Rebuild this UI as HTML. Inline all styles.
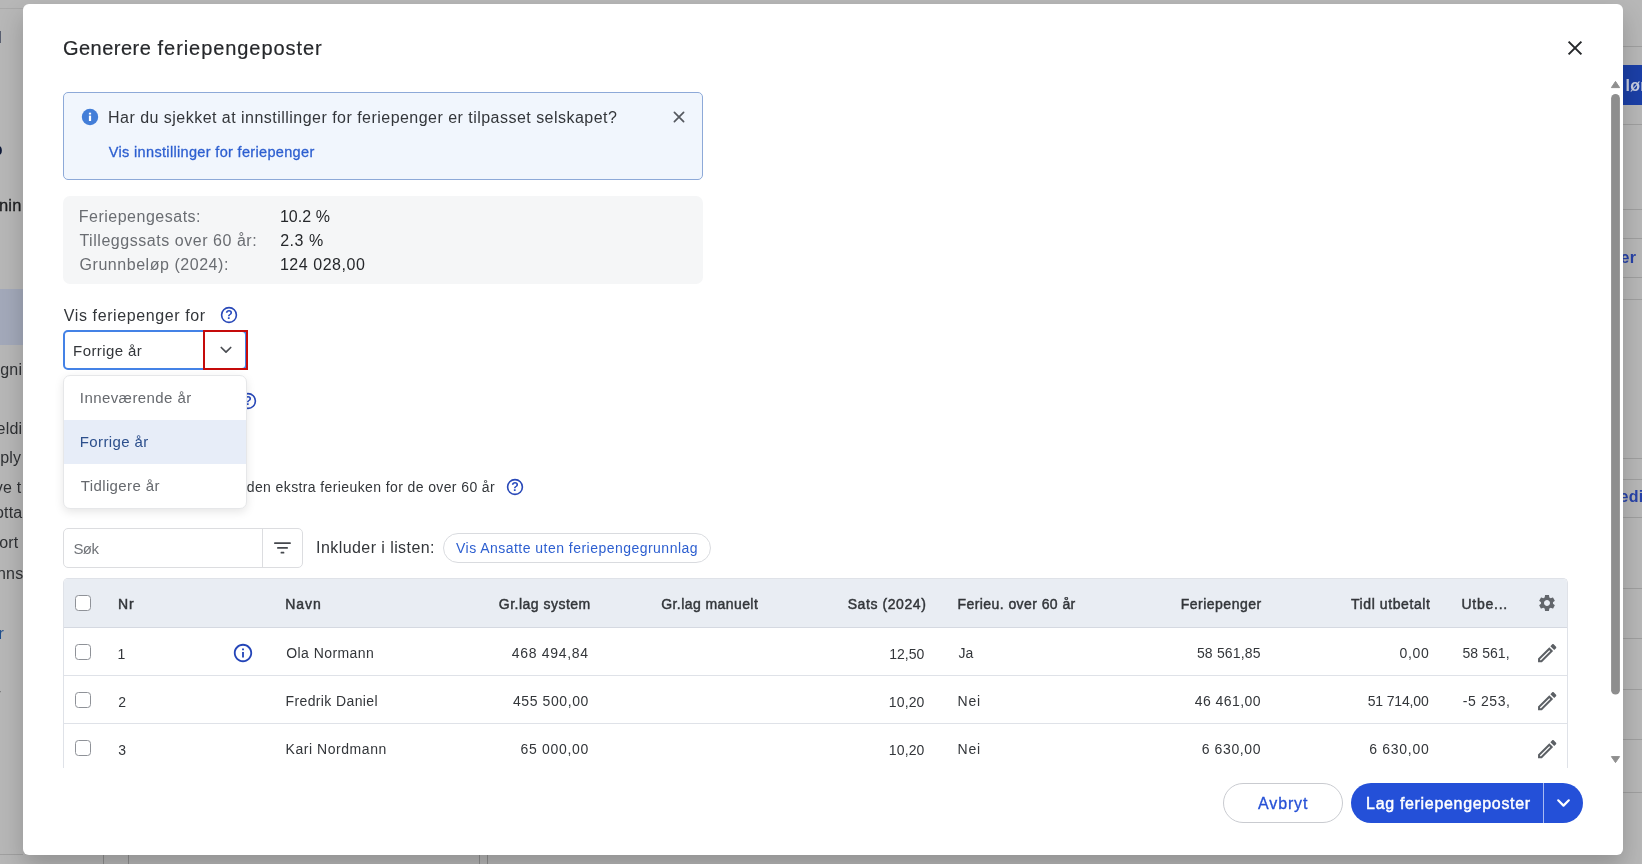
<!DOCTYPE html>
<html lang="nb">
<head>
<meta charset="utf-8">
<title>Generere feriepengeposter</title>
<style>
*{box-sizing:border-box;margin:0;padding:0}
html,body{width:1642px;height:864px;overflow:hidden;background:#b7b7b7;font-family:"Liberation Sans",sans-serif}
.abs,.t{position:absolute}
.t{white-space:nowrap;font-weight:400}
.t.m{-webkit-text-stroke:0.3px currentColor}
.t.m2{-webkit-text-stroke:0.2px currentColor}
.t.m3{-webkit-text-stroke:0.45px currentColor}
.t.b{font-weight:700}
#bg{position:absolute;left:0;top:0;width:1642px;height:864px;overflow:hidden;will-change:transform}
#modal{position:absolute;left:23px;top:4px;width:1600px;height:851px;background:#fff;border-radius:6px;box-shadow:0 12px 24px rgba(0,0,0,.2)}
#layer{position:absolute;left:0;top:0;width:1642px;height:864px;will-change:transform}
.alert{left:63px;top:92px;width:640px;height:88px;background:#f1f6fd;border:1px solid #8da9d8;border-radius:5px}
.facts{left:63px;top:196px;width:640px;height:88px;background:#f5f6f7;border-radius:7px}
.select{left:63px;top:330px;width:184px;height:40px;border:2px solid #4482e6;border-radius:5px;background:#fff}
.redbox{left:203px;top:330px;width:45px;height:40px;border:2px solid #c50a0a;border-radius:0}
.dd{left:63px;top:375px;width:184px;height:134px;background:#fff;border:1px solid #e6e7e9;border-radius:7px;box-shadow:0 3px 10px rgba(0,0,0,.10);overflow:hidden}
.dd .hl{position:absolute;left:0;top:44px;width:100%;height:44px;background:#e7edf8}
.search{left:63px;top:528px;width:240px;height:40px;border:1px solid #dcdde0;border-radius:5px;background:#fff}
.search i{position:absolute;left:198px;top:0;width:1px;height:38px;background:#dcdde0}
.chip{left:443px;top:533px;width:268px;height:30px;border:1px solid #d9dbdf;border-radius:15px;background:#fff}
.tbl{left:63px;top:578px;width:1505px;height:190px;border:1px solid #dfe2e8;border-bottom:none;border-radius:5px 5px 0 0;overflow:hidden;background:#fff}
.tbl .hd{position:absolute;left:0;top:0;width:100%;height:49px;background:#e9edf3;border-bottom:1px solid #d5d9e1}
.tbl .ln{position:absolute;left:0;width:100%;height:1px;background:#dfe2e8}
.cb{width:16px;height:16px;border:1px solid #8f9298;border-radius:3.5px;background:#fff}
.btn1{left:1223px;top:783px;width:120px;height:40px;border:1px solid #c9cbd0;border-radius:20px;background:#fff}
.btn2{left:1351px;top:783px;width:232px;height:40px;border-radius:20px;background:#2450d8}
.btn2 i{position:absolute;left:192px;top:0;width:1px;height:40px;background:#a9bbf2}
svg{position:absolute;overflow:visible}
</style>
</head>
<body>
<div id="bg">
<div class="abs" style="left:0;top:289px;width:23px;height:56px;background:#a3a9ba"></div>
<div class="abs" style="left:0;top:8px;width:23px;height:1px;background:#a9a9a9"></div>
<div class="abs" style="left:0;top:854px;width:23px;height:1px;background:#a0a0a0"></div>
<div class="abs" style="left:1623px;top:65px;width:19px;height:40px;background:#1b3fa6"></div>
<div class="abs" style="left:1623px;top:46px;width:19px;height:1px;background:#9f9f9f"></div>
<div class="abs" style="left:1623px;top:124px;width:19px;height:1px;background:#9f9f9f"></div>
<div class="abs" style="left:1623px;top:209px;width:19px;height:1px;background:#9f9f9f"></div>
<div class="abs" style="left:1623px;top:238px;width:19px;height:1px;background:#9f9f9f"></div>
<div class="abs" style="left:1623px;top:277px;width:19px;height:1px;background:#9f9f9f"></div>
<div class="abs" style="left:1623px;top:299px;width:19px;height:1px;background:#9f9f9f"></div>
<div class="abs" style="left:1623px;top:458px;width:19px;height:1px;background:#9f9f9f"></div>
<div class="abs" style="left:1623px;top:479px;width:19px;height:1px;background:#9f9f9f"></div>
<div class="abs" style="left:1623px;top:517px;width:19px;height:1px;background:#9f9f9f"></div>
<div class="abs" style="left:1623px;top:588px;width:19px;height:1px;background:#9f9f9f"></div>
<div class="abs" style="left:1623px;top:638px;width:19px;height:1px;background:#9f9f9f"></div>
<div class="abs" style="left:1623px;top:689px;width:19px;height:1px;background:#9f9f9f"></div>
<div class="abs" style="left:1623px;top:739px;width:19px;height:1px;background:#9f9f9f"></div>
<div class="abs" style="left:1623px;top:792px;width:19px;height:1px;background:#9f9f9f"></div>
<div class="abs" style="left:103px;top:855px;width:1px;height:9px;background:#8f8f8f"></div>
<div class="abs" style="left:128px;top:855px;width:1px;height:9px;background:#8f8f8f"></div>
<div class="abs" style="left:479px;top:855px;width:1px;height:9px;background:#8f8f8f"></div>
<div class="abs" style="left:487px;top:855px;width:1px;height:9px;background:#8f8f8f"></div>
<span class="t m" style="right:1620.4px;top:193.00px;font-size:16.5px;line-height:24px;color:#1c1d1f;letter-spacing:.2px">nin</span>
<span class="t" style="right:1619.8px;top:358.00px;font-size:16px;line-height:24px;color:#2f3134;letter-spacing:.2px">egni</span>
<span class="t" style="right:1619.7px;top:417.00px;font-size:16px;line-height:24px;color:#2f3134;letter-spacing:.2px">eldi</span>
<span class="t" style="right:1620.8px;top:446.00px;font-size:16px;line-height:24px;color:#2f3134;letter-spacing:.2px">ply</span>
<span class="t" style="right:1620.6px;top:476.00px;font-size:16px;line-height:24px;color:#2f3134;letter-spacing:.2px">ve t</span>
<span class="t" style="right:1619.6px;top:501.00px;font-size:16px;line-height:24px;color:#2f3134;letter-spacing:.2px">otta</span>
<span class="t" style="right:1623.6px;top:531.00px;font-size:16px;line-height:24px;color:#2f3134;letter-spacing:.2px">ort</span>
<span class="t" style="right:1618.6px;top:562.00px;font-size:16px;line-height:24px;color:#2f3134;letter-spacing:.2px">onns</span>
<span class="t" style="right:1638.0px;top:622.00px;font-size:16px;line-height:24px;color:#1f4e8c;letter-spacing:.2px">r</span>
<span class="t b" style="right:1640.0px;top:26.00px;font-size:16px;line-height:24px;color:#101b3a;letter-spacing:.2px">l</span>
<span class="t b" style="right:1639.4px;top:138.00px;font-size:16px;line-height:24px;color:#101b3a;letter-spacing:.2px">p</span>
<span class="t" style="right:1640.8px;top:679.00px;font-size:16px;line-height:24px;color:#2f3134;letter-spacing:.2px">-</span>
<span class="t b" style="left:1625.5px;top:73.5px;font-size:16px;line-height:24px;color:#c6cde0;letter-spacing:.3px">lønn</span>
<span class="t b" style="left:1620.5px;top:246px;font-size:16px;line-height:24px;color:#2742a8;letter-spacing:.3px">er</span>
<span class="t b" style="left:1619.5px;top:485px;font-size:16px;line-height:24px;color:#2742a8;letter-spacing:.3px">edit</span>
</div>
<div id="modal"></div>
<div id="layer">
<div class="abs alert"></div>
<div class="abs facts"></div>
<div class="abs select"></div>
<div class="abs redbox"></div>
<div class="abs search"><i></i></div>
<div class="abs chip"></div>
<div class="abs tbl"><div class="hd"></div><div class="ln" style="top:96px"></div><div class="ln" style="top:144px"></div></div>
<div class="abs cb" style="left:75px;top:595px"></div>
<div class="abs cb" style="left:75px;top:644px"></div>
<div class="abs cb" style="left:75px;top:692px"></div>
<div class="abs cb" style="left:75px;top:740px"></div>
<div class="abs btn1"></div>
<div class="abs btn2"><i></i></div>
<svg style="left:238px;top:390.7px" width="20" height="20" viewBox="0 0 20 20"><circle cx="10" cy="10" r="7.4" fill="#fff" stroke="#2848b8" stroke-width="1.6"/><text x="10" y="14.4" text-anchor="middle" font-family="Liberation Sans, sans-serif" font-weight="700" font-size="12.3" fill="#2a4dc0">?</text></svg>
<span class="t" style="left:95.00px;top:475px;font-size:14px;line-height:24px;color:#33363a;letter-spacing:0.390px;">Ta med feriepenger av den ekstra ferieuken for de over 60 år</span>
<div class="abs dd"><div class="hl"></div></div>
<svg style="left:80px;top:107px" width="20" height="20" viewBox="0 0 20 20"><circle cx="10" cy="10" r="8.2" fill="#437ed8"/><rect x="8.9" y="8.6" width="2.2" height="5.4" fill="#fff"/><rect x="8.9" y="5.7" width="2.2" height="1.8" fill="#fff"/></svg>
<svg style="left:673px;top:111px" width="12" height="12" viewBox="0 0 12 12"><path d="M1.4 1.4L10.6 10.6M10.6 1.4L1.4 10.6" stroke="#55595f" stroke-width="1.7" stroke-linecap="round" fill="none"/></svg>
<svg style="left:219.1px;top:305px" width="20" height="20" viewBox="0 0 20 20"><circle cx="10" cy="10" r="7.4" fill="#fff" stroke="#2848b8" stroke-width="1.6"/><text x="10" y="14.4" text-anchor="middle" font-family="Liberation Sans, sans-serif" font-weight="700" font-size="12.3" fill="#2a4dc0">?</text></svg>
<svg style="left:504.79999999999995px;top:477.3px" width="20" height="20" viewBox="0 0 20 20"><circle cx="10" cy="10" r="7.4" fill="#fff" stroke="#2848b8" stroke-width="1.6"/><text x="10" y="14.4" text-anchor="middle" font-family="Liberation Sans, sans-serif" font-weight="700" font-size="12.3" fill="#2a4dc0">?</text></svg>
<svg style="left:220px;top:345px" width="12" height="10" viewBox="0 0 12 10"><path d="M1.3 2.5L6 7.2L10.7 2.5" stroke="#4a4d52" stroke-width="1.7" fill="none" stroke-linecap="round" stroke-linejoin="round"/></svg>
<svg style="left:272px;top:540px" width="22" height="16" viewBox="0 0 22 16"><rect x="2.1" y="2.3" width="16.7" height="1.8" rx=".5" fill="#45484d"/><rect x="5.1" y="7" width="10.8" height="1.8" rx=".5" fill="#45484d"/><rect x="8.6" y="11.7" width="3.7" height="1.8" rx=".5" fill="#45484d"/></svg>
<svg style="left:232px;top:641.9px" width="22" height="22" viewBox="0 0 24 24"><path fill="#2445b8" d="M11 7h2v2h-2zm0 4h2v6h-2zm1-9C6.48 2 2 6.48 2 12s4.480 10 10 10 10-4.480 10-10S17.520 2 12 2zm0 18c-4.410 0-8-3.590-8-8s3.590-8 8-8 8 3.590 8 8-3.590 8-8 8z"/></svg>
<svg style="left:1537px;top:593px" width="20" height="20" viewBox="0 0 24 24"><path fill="#62666b" d="M19.140 12.940c.040-.300.060-.610.060-.940 0-.320-.020-.640-.070-.940l2.030-1.580c.180-.140.230-.410.120-.610l-1.920-3.320c-.120-.220-.370-.290-.590-.220l-2.390.960c-.500-.380-1.030-.700-1.620-.940l-.360-2.540c-.040-.240-.240-.410-.480-.410h-3.840c-.240 0-.430.170-.470.410l-.360 2.540c-.590.240-1.130.570-1.620.940l-2.390-.960c-.220-.080-.470 0-.590.220L2.740 8.870c-.120.210-.080.470.120.610l2.030 1.580c-.050.300-.090.630-.090.940s.020.640.070.940l-2.030 1.580c-.180.140-.230.410-.120.610l1.920 3.320c.120.220.370.290.590.220l2.390-.960c.500.380 1.030.700 1.620.940l.360 2.540c.050.240.240.410.480.410h3.840c.240 0 .440-.170.470-.410l.360-2.540c.590-.240 1.130-.560 1.620-.940l2.390.960c.220.080.470 0 .590-.220l1.920-3.320c.120-.220.070-.470-.120-.610l-2.010-1.580zM12 15.600c-1.980 0-3.600-1.620-3.600-3.600s1.620-3.600 3.600-3.600 3.600 1.620 3.600 3.600-1.620 3.600-3.600 3.600z"/></svg>
<svg style="left:1535px;top:640.9px" width="24.4" height="24.4" viewBox="0 0 24 24"><path fill="#5c6065" d="M14.060 9.020l.920.920L5.920 19H5v-.920l9.060-9.060M17.660 3c-.250 0-.510.100-.700.290l-1.830 1.830 3.750 3.750 1.830-1.830c.390-.390.390-1.020 0-1.410l-2.340-2.340c-.2-.2-.450-.290-.710-.290zm-3.600 3.190L3 17.250V21h3.750L17.810 9.940l-3.750-3.750z"/></svg>
<svg style="left:1535px;top:688.9px" width="24.4" height="24.4" viewBox="0 0 24 24"><path fill="#5c6065" d="M14.060 9.020l.920.920L5.920 19H5v-.920l9.060-9.060M17.660 3c-.250 0-.510.100-.700.290l-1.830 1.830 3.750 3.750 1.830-1.830c.390-.390.390-1.020 0-1.410l-2.340-2.340c-.2-.2-.450-.290-.710-.290zm-3.600 3.190L3 17.250V21h3.750L17.810 9.940l-3.750-3.750z"/></svg>
<svg style="left:1535px;top:736.9px" width="24.4" height="24.4" viewBox="0 0 24 24"><path fill="#5c6065" d="M14.060 9.020l.920.920L5.920 19H5v-.920l9.060-9.060M17.660 3c-.250 0-.510.100-.700.290l-1.830 1.830 3.750 3.750 1.830-1.830c.390-.390.390-1.020 0-1.410l-2.340-2.340c-.2-.2-.450-.290-.710-.290zm-3.600 3.190L3 17.250V21h3.750L17.810 9.940l-3.750-3.750z"/></svg>
<svg style="left:1567px;top:40px" width="16" height="16" viewBox="0 0 16 16"><path d="M1.6 1.6L14.4 14.4M14.4 1.6L1.6 14.4" stroke="#26282b" stroke-width="2" fill="none"/></svg>
<svg style="left:1608px;top:78px" width="15" height="690" viewBox="0 0 15 690"><path d="M7.5 3.4L11.6 9.6H3.4Z" fill="#8f8f8f" stroke="#8f8f8f" stroke-width="1" stroke-linejoin="round"/><rect x="3.1" y="16" width="8.8" height="600.6" rx="4.4" fill="#8e8e8e"/><path d="M7.5 684.6L11.6 678.6H3.4Z" fill="#8f8f8f" stroke="#8f8f8f" stroke-width="1" stroke-linejoin="round"/></svg>
<svg style="left:1556px;top:798px" width="15" height="11" viewBox="0 0 15 11"><path d="M2.2 2.3L7.5 7.6L12.8 2.3" stroke="#fff" stroke-width="2.2" fill="none" stroke-linecap="round" stroke-linejoin="round"/></svg>
<div class="abs" style="left:1455px;top:630px;width:55px;height:140px;overflow:hidden"><span class="t" style="left:calc(-1455px + 1462.50px);top:calc(-630px + 641px);font-size:14px;line-height:24px;color:#33363a;letter-spacing:0.063px;">58 561,</span><span class="t" style="left:calc(-1455px + 1462.80px);top:calc(-630px + 689px);font-size:14px;line-height:24px;color:#33363a;letter-spacing:0.584px;">-5 253,</span></div>
<span class="t m2" style="left:62.90px;top:33px;font-size:20px;line-height:30px;color:#26282b;letter-spacing:0.504px;">Generere</span>
<span class="t m2" style="left:157.60px;top:33px;font-size:20px;line-height:30px;color:#26282b;letter-spacing:0.930px;">feriepengeposter</span>
<span class="t" style="left:108.10px;top:106px;font-size:16px;line-height:24px;color:#33363a;letter-spacing:0.471px;">Har du sjekket at innstillinger for feriepenger er tilpasset selskapet?</span>
<span class="t m" style="left:108.80px;top:140px;font-size:14.5px;line-height:24px;color:#2d5fd0;letter-spacing:0.333px;">Vis innstillinger for feriepenger</span>
<span class="t" style="left:78.70px;top:205px;font-size:16px;line-height:24px;color:#6a6d72;letter-spacing:0.508px;">Feriepengesats:</span>
<span class="t" style="left:79.40px;top:229px;font-size:16px;line-height:24px;color:#6a6d72;letter-spacing:0.541px;">Tilleggssats over 60 år:</span>
<span class="t" style="left:79.60px;top:253px;font-size:16px;line-height:24px;color:#6a6d72;letter-spacing:0.536px;">Grunnbeløp (2024):</span>
<span class="t" style="left:279.90px;top:205px;font-size:16px;line-height:24px;color:#26282b;letter-spacing:0.063px;">10.2 %</span>
<span class="t" style="left:280.20px;top:229px;font-size:16px;line-height:24px;color:#26282b;letter-spacing:0.503px;">2.3 %</span>
<span class="t" style="left:279.90px;top:253px;font-size:16px;line-height:24px;color:#26282b;letter-spacing:0.547px;">124 028,00</span>
<span class="t" style="left:63.80px;top:304px;font-size:16px;line-height:24px;color:#33363a;letter-spacing:0.605px;">Vis feriepenger for</span>
<span class="t" style="left:73.10px;top:339px;font-size:15px;line-height:24px;color:#33363a;letter-spacing:0.398px;">Forrige år</span>
<span class="t" style="left:73.50px;top:537px;font-size:15px;line-height:24px;color:#707378;letter-spacing:-0.634px;">Søk</span>
<span class="t" style="left:316.00px;top:536px;font-size:16px;line-height:24px;color:#33363a;letter-spacing:0.434px;">Inkluder i listen:</span>
<span class="t" style="left:456.00px;top:536px;font-size:14px;line-height:24px;color:#2d5fd0;letter-spacing:0.472px;">Vis Ansatte uten feriepengegrunnlag</span>
<span class="t m3" style="left:118.00px;top:592px;font-size:14px;line-height:24px;color:#33363a;letter-spacing:0.890px;">Nr</span>
<span class="t m3" style="left:285.25px;top:592px;font-size:14px;line-height:24px;color:#33363a;letter-spacing:0.951px;">Navn</span>
<span class="t m3" style="left:498.75px;top:592px;font-size:14px;line-height:24px;color:#33363a;letter-spacing:0.494px;">Gr.lag system</span>
<span class="t m3" style="left:661.25px;top:592px;font-size:14px;line-height:24px;color:#33363a;letter-spacing:0.422px;">Gr.lag manuelt</span>
<span class="t m3" style="left:847.70px;top:592px;font-size:14px;line-height:24px;color:#33363a;letter-spacing:0.579px;">Sats (2024)</span>
<span class="t m3" style="left:957.50px;top:592px;font-size:14px;line-height:24px;color:#33363a;letter-spacing:0.427px;">Ferieu. over 60 år</span>
<span class="t m3" style="left:1180.70px;top:592px;font-size:14px;line-height:24px;color:#33363a;letter-spacing:0.497px;">Feriepenger</span>
<span class="t m3" style="left:1351.00px;top:592px;font-size:14px;line-height:24px;color:#33363a;letter-spacing:0.586px;">Tidl utbetalt</span>
<span class="t m3" style="left:1461.50px;top:592px;font-size:14px;line-height:24px;color:#33363a;letter-spacing:0.741px;">Utbe...</span>
<span class="t" style="left:117.60px;top:642px;font-size:14px;line-height:24px;color:#33363a;letter-spacing:0.000px;">1</span>
<span class="t" style="left:286.25px;top:641px;font-size:14px;line-height:24px;color:#33363a;letter-spacing:0.428px;">Ola Normann</span>
<span class="t" style="left:511.70px;top:641px;font-size:14px;line-height:24px;color:#33363a;letter-spacing:0.702px;">468 494,84</span>
<span class="t" style="left:889.20px;top:642px;font-size:14px;line-height:24px;color:#33363a;letter-spacing:0.038px;">12,50</span>
<span class="t" style="left:958.50px;top:641px;font-size:14px;line-height:24px;color:#33363a;letter-spacing:0.000px;">Ja</span>
<span class="t" style="left:1196.90px;top:641px;font-size:14px;line-height:24px;color:#33363a;letter-spacing:0.175px;">58 561,85</span>
<span class="t" style="left:1399.40px;top:641px;font-size:14px;line-height:24px;color:#33363a;letter-spacing:0.713px;">0,00</span>
<span class="t" style="left:118.30px;top:690px;font-size:14px;line-height:24px;color:#33363a;letter-spacing:0.000px;">2</span>
<span class="t" style="left:285.50px;top:689px;font-size:14px;line-height:24px;color:#33363a;letter-spacing:0.383px;">Fredrik Daniel</span>
<span class="t" style="left:513.00px;top:689px;font-size:14px;line-height:24px;color:#33363a;letter-spacing:0.580px;">455 500,00</span>
<span class="t" style="left:888.80px;top:690px;font-size:14px;line-height:24px;color:#33363a;letter-spacing:0.138px;">10,20</span>
<span class="t" style="left:957.50px;top:689px;font-size:14px;line-height:24px;color:#33363a;letter-spacing:0.802px;">Nei</span>
<span class="t" style="left:1194.80px;top:689px;font-size:14px;line-height:24px;color:#33363a;letter-spacing:0.438px;">46 461,00</span>
<span class="t" style="left:1367.70px;top:689px;font-size:14px;line-height:24px;color:#33363a;letter-spacing:-0.150px;">51 714,00</span>
<span class="t" style="left:118.30px;top:738px;font-size:14px;line-height:24px;color:#33363a;letter-spacing:0.000px;">3</span>
<span class="t" style="left:285.50px;top:737px;font-size:14px;line-height:24px;color:#33363a;letter-spacing:0.553px;">Kari Nordmann</span>
<span class="t" style="left:520.60px;top:737px;font-size:14px;line-height:24px;color:#33363a;letter-spacing:0.675px;">65 000,00</span>
<span class="t" style="left:888.80px;top:738px;font-size:14px;line-height:24px;color:#33363a;letter-spacing:0.138px;">10,20</span>
<span class="t" style="left:957.50px;top:737px;font-size:14px;line-height:24px;color:#33363a;letter-spacing:0.802px;">Nei</span>
<span class="t" style="left:1201.70px;top:737px;font-size:14px;line-height:24px;color:#33363a;letter-spacing:0.627px;">6 630,00</span>
<span class="t" style="left:1369.20px;top:737px;font-size:14px;line-height:24px;color:#33363a;letter-spacing:0.727px;">6 630,00</span>
<span class="t m" style="left:1258.00px;top:792px;font-size:16px;line-height:24px;color:#2651d6;letter-spacing:0.878px;">Avbryt</span>
<span class="t m3" style="left:1366.10px;top:792px;font-size:16px;line-height:24px;color:#ffffff;letter-spacing:0.674px;">Lag feriepengeposter</span>
<span class="t" style="left:79.80px;top:386px;font-size:15px;line-height:24px;color:#66696e;letter-spacing:0.426px;">Inneværende år</span>
<span class="t" style="left:79.80px;top:430px;font-size:15px;line-height:24px;color:#2c4f8c;letter-spacing:0.386px;">Forrige år</span>
<span class="t" style="left:80.80px;top:474px;font-size:15px;line-height:24px;color:#66696e;letter-spacing:0.375px;">Tidligere år</span>
</div>
</body>
</html>
